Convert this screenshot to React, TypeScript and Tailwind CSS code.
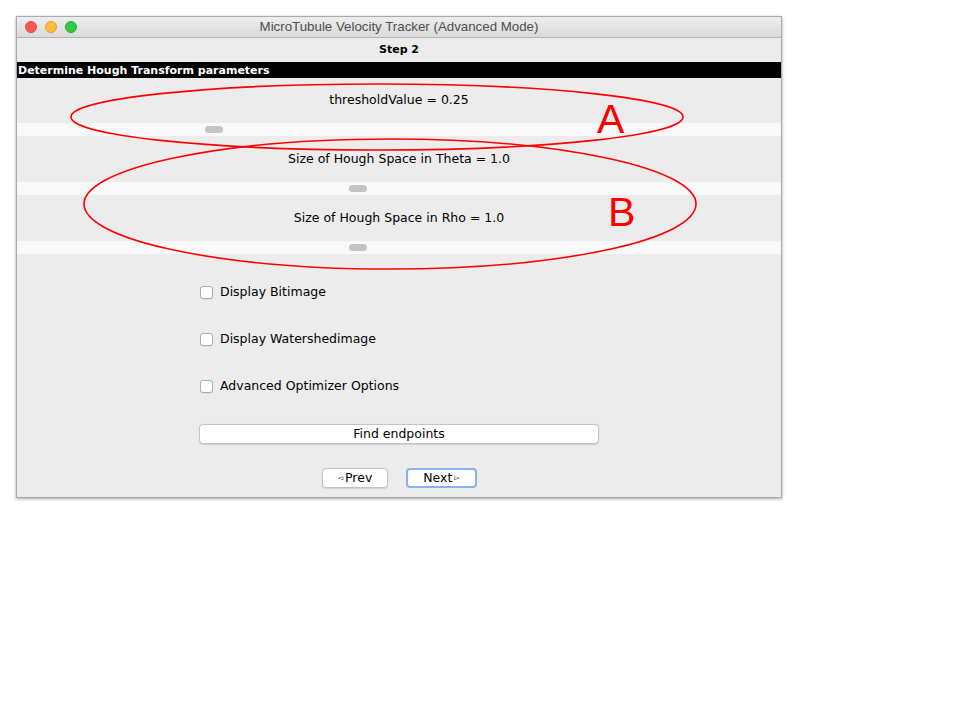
import React from "react";

const sliders = [
  { label: "thresholdValue = 0.25", offset: 188 },
  { label: "Size of Hough Space in Theta = 1.0", offset: 332 },
  { label: "Size of Hough Space in Rho = 1.0", offset: 332 },
];

const checks = ["Display Bitimage", "Display Watershedimage", "Advanced Optimizer Options"];

const ui = { fontFamily: '"DejaVu Sans", "Noto Sans", sans-serif' };

export default function App() {
  return (
    <div className="relative w-[960px] h-[720px] bg-white overflow-hidden">
      <div className="pt-4 pl-4">
        <div
          className="w-[766px] h-[482px] flex flex-col border border-[#a9a9a9] bg-[#ececec] shadow-[0_1px_3px_rgba(0,0,0,0.35)]"
          style={ui}
        >
          {/* title bar */}
          <div className="relative h-[21px] flex items-center justify-center bg-gradient-to-b from-[#eeeeee] to-[#dadada] border-b border-[#b4b4b4]">
            <div className="absolute left-2 top-[4px] flex gap-2">
              <span className="w-3 h-3 rounded-full bg-[#fc5753] border border-[#df4744]" />
              <span className="w-3 h-3 rounded-full bg-[#fdbc40] border border-[#de9f34]" />
              <span className="w-3 h-3 rounded-full bg-[#33c748] border border-[#27aa35]" />
            </div>
            <span
              className="text-[13.3px] text-[#4d4d4d]"
              style={{ fontFamily: '"Liberation Sans", Arial, sans-serif' }}
            >
              MicroTubule Velocity Tracker (Advanced Mode)
            </span>
          </div>

          {/* step */}
          <div className="h-[24px] flex items-center justify-center text-[11px] font-bold text-black">Step 2</div>

          {/* header */}
          <div className="h-4 bg-black flex items-center text-white text-[11px] font-bold leading-none pl-[1px]">
            Determine Hough Transform parameters
          </div>

          {/* sliders */}
          {sliders.map((s, i) => (
            <div key={i} className="flex flex-col">
              <div className={`${i === 0 ? "h-[45px]" : "h-[46px]"} flex items-center justify-center text-[12.5px] text-black`}>
                {s.label}
              </div>
              <div className="h-[13px] bg-[#f9f9f9] flex items-center">
                <span className="w-[18px] h-[7px] rounded-full bg-[#c4c4c4]" style={{ marginLeft: s.offset }} />
              </div>
            </div>
          ))}

          {/* checkboxes */}
          <div className="flex flex-col pl-[183px] pt-[30px] gap-[31px]">
            {checks.map((c) => (
              <div key={c} className="h-4 flex items-center gap-[7px] text-[12.5px] text-black">
                <span className="w-[13px] h-[13px] rounded-[3px] border border-[#ababab] bg-white shadow-[0_0.5px_0.5px_rgba(0,0,0,0.1)]" />
                <span>{c}</span>
              </div>
            ))}
          </div>

          {/* find */}
          <div className="pl-[182px] pt-[30px]">
            <button className="w-[400px] h-[20px] rounded-[4px] border border-[#c3c3c3] bg-white text-[12.5px] text-black flex items-center justify-center shadow-[0_0.5px_1px_rgba(0,0,0,0.12)]">
              Find endpoints
            </button>
          </div>

          {/* nav */}
          <div className="flex pl-[305px] pt-[24px] gap-[18px]">
            <button className="w-[66px] h-[20px] rounded-[4px] border border-[#c3c3c3] bg-white text-[12.5px] text-black flex items-center justify-center shadow-[0_0.5px_1px_rgba(0,0,0,0.12)]">
              <span className="text-[7px] mr-[2px]">◅</span>Prev
            </button>
            <button className="w-[71px] h-[20px] rounded-[4px] border-2 border-[#87b3ee] bg-white text-[12.5px] text-black flex items-center justify-center">
              Next<span className="text-[7px] ml-[2px]">▻</span>
            </button>
          </div>
        </div>
      </div>

      {/* annotation overlay */}
      <svg className="absolute inset-0 pointer-events-none" width="960" height="720">
        <ellipse cx="377" cy="117" rx="306" ry="33" fill="none" stroke="#ff0000" strokeWidth="1.6" />
        <ellipse cx="390" cy="204" rx="306" ry="65" fill="none" stroke="#ff0000" strokeWidth="1.6" />
        <text x="597" y="133" fontSize="41" fill="#ff0000" fontFamily="Liberation Sans, Arial, sans-serif">A</text>
        <text x="608" y="226" fontSize="41" fill="#ff0000" fontFamily="Liberation Sans, Arial, sans-serif">B</text>
      </svg>
    </div>
  );
}
